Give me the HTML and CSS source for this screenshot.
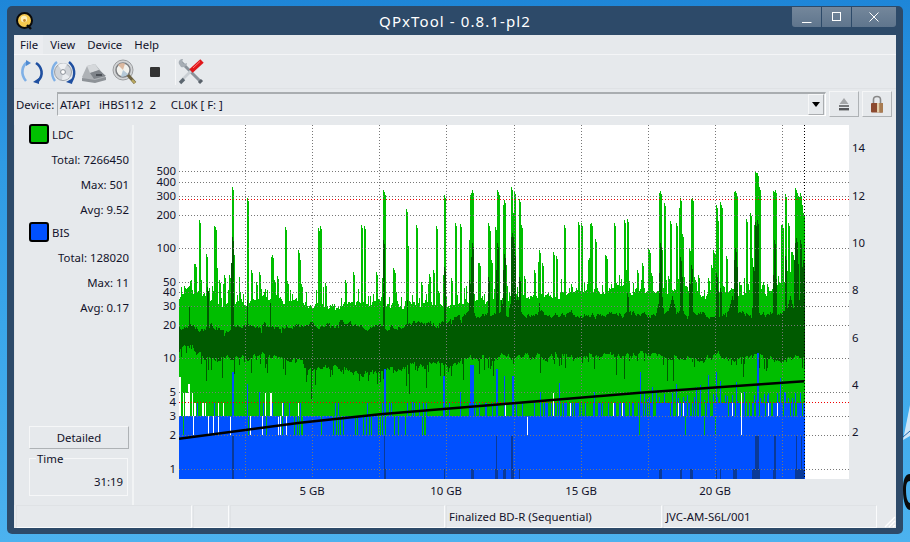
FILE: index.html
```html
<!DOCTYPE html>
<html lang="en">
<head>
<meta charset="utf-8">
<title>QPxTool - 0.8.1-pl2</title>
<link rel="stylesheet" href="styles.css">
</head>
<body>
<svg class="desk-art" width="7" height="542" viewBox="0 0 7 542">
  <path d="M7 405 L0 440 L7 436Z" fill="#cfe6f7"/>
  <path d="M0 437 L7 431" stroke="#1a62a8" stroke-width="1"/>
  <path d="M7 474 C2 474 0 480 0 490 C0 502 3 510 7 510 L7 503 C4 502 3 496 3 490 C3 484 4 481 7 481Z" fill="#0b0b0b"/>
</svg>
<div class="window">
  <div class="titlebar">
    <svg class="app-icon" width="18" height="18" viewBox="0 0 18 18">
      <circle cx="8.5" cy="8.5" r="7.5" fill="#f5c94e" stroke="#0a0a0a" stroke-width="2"/>
      <circle cx="8" cy="7" r="3.2" fill="#fbeeb8"/>
      <circle cx="8.5" cy="8.5" r="1.4" fill="#c98a2c"/>
      <path d="M11 13 L15 17" stroke="#0a0a0a" stroke-width="2.4"/>
    </svg>
    <div class="title">QPxTool - 0.8.1-pl2</div>
    <div class="win-btns">
      <div class="win-btn btn-min"><svg width="10" height="10" viewBox="0 0 10 10"><path d="M0 9.5H9.5" stroke="#fff" stroke-width="1"/></svg></div>
      <div class="win-btn btn-max"><svg width="10" height="10" viewBox="0 0 10 10"><rect x=".5" y=".5" width="8" height="8" fill="none" stroke="#fff"/></svg></div>
      <div class="win-btn btn-close"><svg width="10" height="10" viewBox="0 0 10 10"><path d="M.5 .5L9.5 9.5M9.5 .5L.5 9.5" stroke="#fff" stroke-width="1"/></svg></div>
    </div>
  </div>
  <div class="client">
    <div class="menubar">
      <span class="menu-item menu-active">File</span>
      <span class="menu-item">View</span>
      <span class="menu-item">Device</span>
      <span class="menu-item">Help</span>
    </div>
    <div class="toolbar">
      <svg class="tool" width="26" height="26" viewBox="0 0 26 26">
        <path d="M9 3 C3 6 1 15 7 22" fill="none" stroke="#7fb0e6" stroke-width="2.6"/>
        <path d="M12 4 L7 1 L7 7Z" fill="#4f8ad2"/>
        <path d="M17 4 C23 8 25 16 19 22" fill="none" stroke="#1f4fa0" stroke-width="2.6"/>
        <path d="M14 23 L20 25 L20 19Z" fill="#1f4fa0"/>
      </svg>
      <svg class="tool" width="26" height="26" viewBox="0 0 26 26">
        <circle cx="13" cy="13" r="8.5" fill="#cfd3d8" stroke="#9aa0a8"/>
        <path d="M13 13 L8 6 A9 9 0 0 1 17 5Z" fill="#eef0f2"/>
        <path d="M13 13 L20 18 A9 9 0 0 1 12 21Z" fill="#e9ecef"/>
        <circle cx="13" cy="13" r="2.4" fill="#fff" stroke="#8a9098"/>
        <path d="M7 3 C2 7 0 15 5 22" fill="none" stroke="#7fb0e6" stroke-width="2.4"/>
        <path d="M19 3 C25 8 26 16 21 23" fill="none" stroke="#1f4fa0" stroke-width="2.4"/>
        <path d="M16 23 L22 25 L23 19Z" fill="#1f4fa0"/>
      </svg>
      <svg class="tool" width="26" height="26" viewBox="0 0 26 26">
        <path d="M1 18 L6 7 L14 5 L24 17 L24 21 L4 22Z" fill="#aeb2b6"/>
        <path d="M6 7 L14 5 L18 11 L9 14Z" fill="#d5d8db"/>
        <path d="M9 14 L18 11 L25 17 L13 20Z" fill="#7f848a"/>
        <path d="M1 19 L14 21 L25 18 L25 21 L14 24 L1 22Z" fill="#8d9297"/>
        <rect x="15" y="15" width="6" height="2" fill="#4a4f55"/>
      </svg>
      <svg class="tool" width="26" height="26" viewBox="0 0 26 26">
        <circle cx="11" cy="11" r="10" fill="#d2d4d6" stroke="#9c9ea0"/>
        <circle cx="11" cy="11" r="7" fill="#f2f2ee" stroke="#7d7f82" stroke-width="1.5"/>
        <path d="M11 11 L6 6 A7 7 0 0 1 13 4.5Z" fill="#dcb9a0"/>
        <path d="M11 11 L16 15 A7 7 0 0 1 9 17.5Z" fill="#b5c9d8"/>
        <path d="M16 16 L23 24" stroke="#6d6242" stroke-width="3.4"/>
        <path d="M20 21 L23 24" stroke="#b8a860" stroke-width="2.4"/>
      </svg>
      <svg class="tool tool-stop" width="12" height="12" viewBox="0 0 12 12"><rect x="1" y="1" width="10" height="10" rx="1" fill="#333"/></svg>
      <div class="tool-sep"></div>
      <svg class="tool tool-wrench" width="26" height="26" viewBox="0 0 26 26">
        <path d="M3 3 L22 22" stroke="#8a929a" stroke-width="3"/>
        <path d="M1 5 C0 2 2 0 5 0 L4 3 L6 5 L9 4 C9 7 6 9 3 8Z" fill="#a6adb4"/>
        <path d="M21 24 L24 21" stroke="#59616a" stroke-width="3"/>
        <path d="M3 22 L13 12" stroke="#c9ced3" stroke-width="2.6"/>
        <path d="M2 24 L6 20" stroke="#5c6670" stroke-width="3.4"/>
        <path d="M13 12 L24 2" stroke="#e0161a" stroke-width="5"/>
        <path d="M15 9 L22 2.5" stroke="#f77" stroke-width="1"/>
      </svg>
    </div>
    <div class="device-row">
      <span class="device-label">Device:</span>
      <div class="combo">
        <span class="combo-text">ATAPI   iHBS112  2     CL0K [ F: ]</span>
        <div class="combo-arrow"><i class="arrow"></i></div>
      </div>
      <div class="square-btn">
        <svg width="14" height="14" viewBox="0 0 14 14"><path d="M7 1 L11.5 7 H2.5Z" fill="#a4a6a8"/><rect x="2" y="8" width="10" height="2" fill="#77797b"/><rect x="2" y="11" width="10" height="2.4" fill="#55575a"/></svg>
      </div>
      <div class="square-btn">
        <svg width="14" height="18" viewBox="0 0 14 18"><path d="M3.5 8 V4.5 C3.5 0.5 10.5 0.5 10.5 4.5 V8" fill="none" stroke="#888" stroke-width="1.6"/><rect x="1" y="8" width="12" height="9.5" rx="1" fill="#8c4a30"/><rect x="7" y="8" width="2.6" height="9.5" fill="#e2cda8"/><rect x="9.6" y="8" width="3.4" height="9.5" fill="#a87c52"/></svg>
      </div>
    </div>
    <div class="main">
      <aside class="side">
        <div class="legend"><i class="swatch swatch-ldc"></i><span>LDC</span></div>
        <div class="stat">Total: 7266450</div>
        <div class="stat">Max: 501</div>
        <div class="stat">Avg: 9.52</div>
        <div class="legend"><i class="swatch swatch-bis"></i><span>BIS</span></div>
        <div class="stat">Total: 128020</div>
        <div class="stat">Max: 11</div>
        <div class="stat">Avg: 0.17</div>
        <div class="side-fill"></div>
        <div class="detail-btn">Detailed</div>
        <div class="time-box">
          <span class="time-title">Time</span>
          <div class="time-value">31:19</div>
        </div>
      </aside>
      <div class="chart">
        <canvas id="plot" class="plot" width="670" height="354"></canvas>
        <span class="yl" data-y="171">500</span>
        <span class="yl" data-y="182">400</span>
        <span class="yl" data-y="196">300</span>
        <span class="yl" data-y="215">200</span>
        <span class="yl" data-y="248">100</span>
        <span class="yl" data-y="282">50</span>
        <span class="yl" data-y="292">40</span>
        <span class="yl" data-y="306">30</span>
        <span class="yl" data-y="325">20</span>
        <span class="yl" data-y="358">10</span>
        <span class="yl" data-y="392">5</span>
        <span class="yl" data-y="402">4</span>
        <span class="yl" data-y="416">3</span>
        <span class="yl" data-y="435">2</span>
        <span class="yl" data-y="469">1</span>
        <span class="yr" data-y="148">14</span>
        <span class="yr" data-y="196">12</span>
        <span class="yr" data-y="243">10</span>
        <span class="yr" data-y="290">8</span>
        <span class="yr" data-y="338">6</span>
        <span class="yr" data-y="385">4</span>
        <span class="yr" data-y="432">2</span>
        <span class="xl" data-x="312">5 GB</span>
        <span class="xl" data-x="446">10 GB</span>
        <span class="xl" data-x="581">15 GB</span>
        <span class="xl" data-x="715">20 GB</span>
      </div>
    </div>
    <div class="statusbar">
      <div class="cell cell-a"></div>
      <div class="cell cell-b"></div>
      <div class="cell cell-c"></div>
      <div class="cell cell-d">Finalized BD-R (Sequential)</div>
      <div class="cell cell-e">JVC-AM-S6L/001</div>
      <svg class="grip" width="14" height="14" viewBox="0 0 14 14"><path d="M13 3L3 13M13 7L7 13M13 11L11 13" stroke="#fff" stroke-width="1.4"/></svg>
    </div>
  </div>
</div>
<script src="script.js"></script>
</body>
</html>
```
FILE: styles.css
```css
* { box-sizing: border-box; }
html, body { margin: 0; padding: 0; }
body {
  width: 910px; height: 542px; overflow: hidden; position: relative;
  background: linear-gradient(180deg, #1e86d8 0, #2f9ae4 30%, #3aa6ea 60%, #4cb2ef 100%);
  font: 11.4px "Noto Sans", "Open Sans", sans-serif; color: #12122a;
}
.desk-art { position: absolute; left: 903px; top: 0; }
.window {
  position: absolute; left: 7px; top: 6px; width: 896px; height: 528px;
  background: #2d4a69; border-radius: 5px; padding: 0 7px 6px;
  display: flex; flex-direction: column;
}
.titlebar { height: 29px; flex: none; position: relative; display: flex; align-items: center; }
.app-icon { margin-left: 2px; margin-top: 1px; flex: none; }
.title { position: absolute; left: 0; right: 0; text-align: center; top: 6px; color: #fff; font-size: 15px; letter-spacing: 1.1px; line-height: 18px; }
.win-btns { position: absolute; right: 0; top: 1px; display: flex; gap: 1px; }
.win-btn { height: 20px; background: linear-gradient(180deg, #74879b, #5f758d); display: flex; align-items: center; justify-content: center; }
.btn-min { width: 29px; border-bottom-left-radius: 3px; padding-top: 2px; }
.btn-max { width: 29px; }
.btn-close { width: 44px; border-bottom-right-radius: 3px; }
.client { flex: 1; background: #e6e9ec; display: flex; flex-direction: column; min-height: 0; }
.menubar { height: 20px; flex: none; display: flex; align-items: center; padding-left: 1px; border-bottom: 1px solid #f4f5f7; }
.menu-item { padding: 0 5px; height: 19px; line-height: 19px; }
.menu-active { background: #ebedf0; }
.menu-item + .menu-item { margin-left: 2px; }
.toolbar { height: 34px; flex: none; display: flex; align-items: center; padding-left: 5px; border-bottom: 1px solid #dfe2e5; gap: 5px; }
.tool { flex: none; }
.tool-stop { margin-left: 6px; }
.tool-sep { width: 1px; height: 26px; background: #f6f7f8; margin-left: 9px; }
.tool-wrench { margin-left: -3px; }
.device-row { height: 30px; flex: none; display: flex; align-items: center; padding: 0 3px 0 2px; }
.device-label { width: 41px; flex: none; }
.combo { width: 769px; height: 24px; flex: none; border: 1px solid; border-color: #a9adb0 #fff #fff #a9adb0; border-top-width: 2px; display: flex; align-items: center; justify-content: space-between; padding: 0 1px 0 2px; }
.combo-text { white-space: pre; }
.combo-arrow { width: 16px; height: 21px; border: 1px solid; border-color: #f6f7f8 #aaadb0 #aaadb0 #f6f7f8; display: flex; align-items: center; justify-content: center; }
.arrow { width: 0; height: 0; border: 4px solid transparent; border-top: 5px solid #000; border-bottom: 0; }
.square-btn { width: 30px; height: 26px; flex: none; margin-left: 3px; border: 1px solid; border-color: #f5f6f7 #aeb2b5 #aeb2b5 #f5f6f7; display: flex; align-items: center; justify-content: center; }
.main { flex: 1; display: flex; min-height: 0; padding-top: 6px; }
.side { width: 120px; flex: none; display: flex; flex-direction: column; padding: 0 3px 9px 15px; border-right: 2px solid #f2f4f5; box-shadow: inset 6px 0 0 -5px #dfe2e5; }
.legend { height: 20px; margin-bottom: 3px; display: flex; align-items: center; gap: 3px; flex: none; }
.legend:first-child { margin-top: -1px; }
.swatch { width: 20px; height: 20px; border: 2px solid #000; border-radius: 3px; flex: none; }
.swatch-ldc { background: #00c000; }
.swatch-bis { background: #0050ff; }
.stat { height: 25px; line-height: 25px; text-align: right; flex: none; }
.side-fill { flex: 1; }
.detail-btn { height: 23px; flex: none; width: 100px; text-align: center; line-height: 22px; border: 1px solid; border-color: #f6f7f8 #aeb2b5 #aeb2b5 #f6f7f8; }
.time-box { position: relative; height: 38px; width: 99px; flex: none; margin-top: 9px; border: 1px solid #f6f7f8; }
.time-title { position: absolute; left: 6px; top: -7px; padding: 0 1px; background: #e6e9ec; line-height: 14px; }
.time-value { position: absolute; right: 4px; top: 15px; line-height: 16px; }
.chart { flex: 1; position: relative; }
.plot { position: absolute; left: 45px; top: 0; display: block; background: #fff; }
.yl, .yr, .xl { position: absolute; line-height: 14px; }
.yl { right: 720px; text-align: right; }
.yr { left: 718px; }
.xl { transform: translateX(-50%); }
.statusbar { height: 23px; flex: none; display: flex; align-items: stretch; position: relative; padding: 0 2px; gap: 1px; }
.cell { border: 1px solid; border-color: #dfe2e5 #fafbfc #fafbfc #dfe2e5; line-height: 21px; padding-left: 2px; white-space: nowrap; }
.cell-a { width: 176px; }
.cell-b { width: 36px; }
.cell-c { width: 215px; }
.cell-d { width: 216px; }
.cell-e { width: 214px; }
.grip { position: absolute; right: 0; bottom: 0; }
```
FILE: script.js
```js
(function () {
  // Place axis labels from their data coordinates.
  var cx = 134, cy = 125; // origin of .chart in page space
  document.querySelectorAll('.yl, .yr').forEach(function (el) {
    el.style.top = (parseFloat(el.dataset.y) - cy - 7) + 'px';
  });
  document.querySelectorAll('.xl').forEach(function (el) {
    el.style.left = (parseFloat(el.dataset.x) - cx) + 'px';
    el.style.top = (491 - cy - 7) + 'px';
  });

  var c = document.getElementById('plot').getContext('2d');
  var X0 = 179, Y0 = 125, W = 670, H = 354, END = 804, BOTTOM = 479;
  var seed = 12345;
  function r() { seed = (seed * 1664525 + 1013904223) >>> 0; return seed / 4294967296; }
  function rect(x, y1, y2, col) { c.fillStyle = col; c.fillRect(x - X0, y1 - Y0, 1, y2 - y1); }

  var GREEN = '#00be00', DARK = '#005a00', BLUE = '#0050ff', NAVY = '#0a3a98', WHITE = '#ffffff';

  // spike tables are [x, topY] read off the reference
  function pack(ox, oy, list) {
    var out = [];
    for (var i = 0; i < list.length; i += 2) out.push([Math.round(ox + list[i] / 3), Math.round(oy + list[i + 1] / 3)]);
    return out;
  }
  var spikes = [].concat(
    pack(180, 160, [43,312,44,312,58,180,61,350,79,282,103,198,106,200,109,315,118,360,130,372,133,345,148,345,156,82,159,275,202,115,212,330,227,365,237,335,272,290,275,285,282,360,292,348,316,200,322,362,355,270,358,290,362,372,378,396,408,390,415,205,421,198,430,380,436,370,495,360,520,335,544,195,553,198,588,335]),
    pack(380, 160, [7,355,10,90,13,95,40,323,43,330,79,148,82,250,109,195,124,365,148,342,160,330,169,198,189,345,192,105,213,353,225,188,240,192,258,377,267,240,270,105,273,100,277,90,294,310,297,308,324,188,327,205,333,300,345,200,350,90,353,95,369,135,372,120,375,305,381,378,393,82,396,150,402,92,417,118,420,320,423,195,432,348,463,330,474,305,477,270,487,310,520,277,529,288,553,195,595,186,604,190,625,300,628,295,631,192,634,190,645,237]),
    pack(600, 160, [16,285,19,288,43,190,73,180,76,320,82,177,112,330,127,310,143,265,146,270,154,340,177,100,180,93,184,260,192,130,205,348,211,183,229,190,238,145,241,115,247,222,268,265,272,118,276,113,283,352,295,345,325,355,333,315,339,270,345,285,348,135,351,175,360,125,363,135,378,288,402,95,405,92,408,100,417,365,438,178,450,160,453,285,462,195,466,35,469,38,471,40,477,80,489,365,505,380,519,92,522,95,525,90,543,195,546,195,555,102,565,190,573,275,576,275,584,85,587,90,589,90,592,100,595,110,598,110,601,100,604,125,607,150,610,160,613,215])
  );
  var darkSpikes = [].concat(
    pack(180, 160, [81,380,27,440,153,310,156,232,202,420,271,430]),
    pack(380, 160, [10,240,81,420,192,320,267,360,272,290,276,250,323,350,348,330,350,248,369,330,372,283,393,230,396,220,399,240,402,275,417,350,478,430]),
    pack(600, 160, [82,400,177,340,180,250,184,400,241,292,244,340,268,360,272,315,348,340,351,380,360,385,402,300,405,265,408,310,460,320,465,185,468,215,471,180,519,345,522,240,525,345,555,288,582,300,585,250,588,235,592,300,600,240,604,310,610,300])
  );
  var hills = [[233,300],[270,318],[470,300],[500,300],[517,295],[512,290],[660,285],[672,290],[732,285],[755,280],[790,270],[796,270],[800,275]];
  var spikeMap = {}, darkMap = {};
  function mark(map, x, y) { if (!map[x] || y < map[x]) map[x] = y; }
  spikes.forEach(function (s) {
    mark(spikeMap, s[0], s[1]);
    if (s[1] < 285) mark(spikeMap, s[0] + 1, s[1] + 3);
  });
  darkSpikes.forEach(function (s) {
    mark(darkMap, s[0], s[1]);
    if (s[1] < 300) mark(darkMap, s[0] + 1, s[1] + 4);
  });

  function lerp(pts, x) {
    for (var i = 1; i < pts.length; i++) {
      if (x <= pts[i][0]) {
        var a = pts[i - 1], b = pts[i];
        return a[1] + (b[1] - a[1]) * (x - a[0]) / (b[0] - a[0]);
      }
    }
    return pts[pts.length - 1][1];
  }
  var greenBase = [[179,300],[185,288],[195,296],[230,300],[380,306],[470,302],[520,296],[600,290],[700,292],[804,288]];
  var darkTop = [[179,328],[300,326],[380,326],[440,324],[470,316],[520,314],[804,314]];
  var darkBot = [[179,346],[192,346],[196,356],[300,358],[306,368],[380,372],[395,368],[440,366],[470,358],[600,355],[804,358]];

  // column state is correlated so the envelope looks stepped, as the plot does
  var gN = 0, dtN = 0, dbN = 0;
  var navy = [[232,233],[384,385],[444,444],[471,473],[495,497],[503,505],[511,513],[519,519],[659,661],[680,681],[690,692],[716,716],[720,720],[733,736],[752,759],[773,775],[795,803]];
  var navyTall = [232,233,384,496,511,512,755,756,757,758,774,775,796,801];
  var whiteUpper = [[179,180,377],[183,183,393],[185,187,393],[188,189,384],[192,192,393],[194,195,403],[202,203,403],[205,205,403],[218,218,403],[223,223,403],[265,265,393],[270,271,393],[282,282,403],[298,298,403],[505,505,403],[553,553,393],[570,570,403],[613,613,403],[622,622,403],[678,678,403],[683,683,403],[732,732,403],[741,741,393],[768,768,403],[777,777,403]];
  var whiteLower = [193,208,213,218,230,250,262,278,280,286,527,741];
  var blueSpike = {187:400,232:372,233:372,247:384,259:392,384:369,385:369,412:402,443:376,444:376,460:392,470:365,471:365,472:365,473:365,496:369,497:369,504:376,512:376,513:376,540:392,559:383,594:392,757:353,758:353};
  for (var k = 640; k < 804; k += 4) { if (!blueSpike[k] && r() < 0.55) blueSpike[k] = 372 + r() * 30; }

  for (var x = X0; x <= END; x++) {
    gN += (r() - 0.5) * 7; gN *= 0.8;
    dtN += (r() - 0.5) * 6; dtN *= 0.78;
    dbN += (r() - 0.5) * 6; dbN *= 0.8;
    // --- green envelope
    var gTop = lerp(greenBase, x) + gN + (r() < 0.18 ? -r() * 12 : 0);
    if (r() < 0.05) gTop -= 8 + r() * 10;
    if (spikeMap[x]) gTop = Math.min(gTop, spikeMap[x]);
    hills.forEach(function (h) { var d = Math.abs(h[0] - x); if (d < 5) gTop = Math.min(gTop, h[1] + d * 2 + r() * 4); });
    rect(x, Math.round(gTop), 416, GREEN);

    // --- dark band
    var dTop = lerp(darkTop, x) + dtN, dBot = lerp(darkBot, x) + dbN;
    if (r() < 0.12) dBot += r() * 12;
    if (r() < 0.06) dTop += r() * 6;
    if (darkMap[x]) dTop = Math.min(dTop, darkMap[x]);
    hills.forEach(function (h) { var d = Math.abs(h[0] - x); if (x > 500 && d < 4) dTop = Math.min(dTop, 296 + d * 4); });
    rect(x, Math.round(dTop), Math.round(dBot), DARK);
    if (r() < 0.03) rect(x, Math.round(dBot), Math.round(dBot) + 10 + Math.round(r() * 14), DARK);

    // --- blue mass
    rect(x, 416, BOTTOM, BLUE);
    var pBlue = x < 380 ? 0.08 : x < 540 ? 0.16 : x < 640 ? 0.38 : 0.62;
    if (r() < pBlue) rect(x, 403, 416, BLUE);
    if (x > 640 && r() < 0.12) rect(x, 392 + Math.round(r() * 10), 403, BLUE);
    if (blueSpike[x]) rect(x, Math.round(blueSpike[x]), 416, BLUE);

    // --- green hairlines inside the blue
    var pG = x < 288 ? 0.02 : x < 400 ? 0.2 : x < 440 ? 0.1 : x < 800 ? 0.025 : 0;
    if (r() < pG) rect(x, 416, 435, GREEN);

    // --- bottom navy ticks
    navy.forEach(function (n) { if (x >= n[0] && x <= n[1]) rect(x, 469, BOTTOM, NAVY); });
    if (navyTall.indexOf(x) >= 0) rect(x, 436, BOTTOM, NAVY);
  }
  whiteUpper.forEach(function (w) { for (var i = w[0]; i <= w[1]; i++) rect(i, w[2], 416, WHITE); });
  whiteLower.forEach(function (i) { rect(i, 416, 435, WHITE); });

  // --- grid
  function hdots(y, col) { c.fillStyle = col; for (var i = 0; i < W; i += 3) c.fillRect(i, y - Y0, 1, 1); }
  function vdots(x, col) { c.fillStyle = col; for (var i = 0; i < H; i += 3) c.fillRect(x - X0, i, 1, 1); }
  var GRID = '#777777';
  [171,182,196,215,248,282,292,306,325,358,392,416,435,469].forEach(function (y) { hdots(y, GRID); });
  [245,312,379,446,514,581,648,715,782].forEach(function (x) { vdots(x, GRID); });
  vdots(END, '#000');
  hdots(199, '#f00000');
  hdots(402, '#f00000');

  // --- trend line
  var line = [[179,438.7],[300,422.7],[380,414.3],[640,392.7],[804,381.3]];
  c.strokeStyle = '#000'; c.lineWidth = 2.4; c.beginPath();
  line.forEach(function (p, i) { c[i ? 'lineTo' : 'moveTo'](p[0] - X0, p[1] - Y0); });
  c.stroke();
})();
```
